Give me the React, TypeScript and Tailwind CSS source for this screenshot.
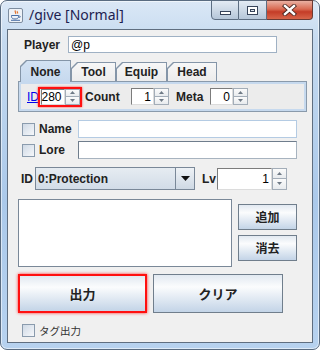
import React from "react";

const sans = "font-['Liberation_Sans','Noto_Sans_CJK_JP',sans-serif]";
const jp = "font-['Noto_Sans_CJK_JP',sans-serif]";
const btn =
  "flex items-center justify-center border border-[#707e8c] bg-[linear-gradient(to_bottom,#e2e9f1,#fbfcfd_32%,#c3d4e7)] font-bold text-[#222]";

function Arrow({ up }: { up?: boolean }) {
  return (
    <svg width="5" height="3" viewBox="0 0 5 3">
      <path d={up ? "M0 3h5L2.5 0z" : "M0 0h5L2.5 3z"} fill="#6f7a86" />
    </svg>
  );
}

function Spinner({ value, field, height }: { value: string; field: string; height: string }) {
  return (
    <div className={`flex ${height}`}>
      <div
        className={`${field} flex items-center justify-end border border-t-[#7c7c7c] border-l-[#7c7c7c] border-b-[#dcdcdc] border-r-[#dcdcdc] bg-white pr-[2px] text-[12px] text-black`}
      >
        {value}
      </div>
      <div className="flex w-[15px] flex-col">
        <div className="flex flex-1 items-center justify-center border border-[#a3adb8] bg-[linear-gradient(to_bottom,#fbfbfb,#e8ebee)]">
          <Arrow up />
        </div>
        <div className="-mt-px flex flex-1 items-center justify-center border border-[#a3adb8] bg-[linear-gradient(to_bottom,#fbfbfb,#e8ebee)]">
          <Arrow />
        </div>
      </div>
    </div>
  );
}

function Tab({ label, w, selected }: { label: string; w: string; selected?: boolean }) {
  const clip = "[clip-path:polygon(6px_0,100%_0,100%_100%,0_100%,0_6px)]";
  return (
    <div
      className={`${w} ${clip} bg-[#8495a8] px-px pt-px ${
        selected ? "h-[22px]" : "mb-px h-[19px]"
      }`}
    >
      <div
        className={`${clip} flex h-full items-center justify-center text-[12px] font-bold text-[#222] ${
          selected
            ? "bg-[linear-gradient(to_bottom,#d3e2f3,#c6d9ee)]"
            : "bg-[linear-gradient(to_bottom,#f7f7f7,#ececec)]"
        }`}
      >
        {label}
      </div>
    </div>
  );
}

function Check() {
  return (
    <div className="h-[13px] w-[13px] border border-[#8a9bad] bg-[linear-gradient(135deg,#cfd9e5,#f6f8fb)]" />
  );
}

function JavaIcon() {
  return (
    <svg width="15" height="15" viewBox="0 0 15 15">
      <rect x="0.5" y="0.5" width="14" height="14" rx="1.5" fill="#eef2f7" stroke="#7d8da0" />
      <path d="M7.5 2.5c-1.5 1.2 1.2 1.8 0 3.4M9.5 3.2c-1 .8.8 1.2 0 2.3" stroke="#e0712b" strokeWidth="1.2" fill="none" />
      <path d="M3.5 7.5h7v1.2c0 1.5-1.5 2.3-3.5 2.3S3.5 10.2 3.5 8.7z" fill="none" stroke="#4a6fa5" strokeWidth="1" />
      <path d="M10.5 8h1.2c.8 0 .8 1.4 0 1.4h-1" fill="none" stroke="#4a6fa5" strokeWidth="0.9" />
      <path d="M3 12.3h9" stroke="#4a6fa5" strokeWidth="1" />
    </svg>
  );
}

export default function App() {
  return (
    <div className={`h-[350px] w-[320px] bg-white ${sans}`}>
      <div className="flex h-[350px] w-[320px] flex-col rounded-[7px] border border-[#5a6c81] bg-[linear-gradient(to_bottom,#dbe8f6,#c5daf0_40px,#abc9ea_200px,#b7d2ef)] shadow-[inset_0_0_0_1px_rgba(255,255,255,0.55)]">
        {/* title bar */}
        <div className="flex h-[28px] items-start">
          <div className="ml-[7px] mt-[7px]">
            <JavaIcon />
          </div>
          <div className="ml-[6px] mt-[5px] font-['Noto_Sans',sans-serif] text-[14px] leading-[18px] text-[#1d2150]">
            /give [Normal]
          </div>
          <div className="-mt-px ml-auto mr-[6px] flex h-[20px]">
            <div className="flex w-[28px] items-end justify-center rounded-bl-[4px] border border-[#5c6d81] bg-[linear-gradient(to_bottom,#e3ebf4,#cdd9e6_50%,#b5c6d9)] pb-[4px]">
              <div className="h-[4px] w-[11px] border border-[#37445a] bg-white" />
            </div>
            <div className="flex w-[28px] items-center justify-center border border-l-0 border-[#5c6d81] bg-[linear-gradient(to_bottom,#e3ebf4,#cdd9e6_50%,#b5c6d9)]">
              <div className="flex h-[9px] w-[11px] items-center justify-center border border-[#37445a] bg-white">
                <div className="h-[3px] w-[5px] border border-[#37445a] bg-[#dfe6ee]" />
              </div>
            </div>
            <div className="flex w-[46px] items-center justify-center rounded-br-[4px] border border-l-0 border-[#6b3a33] bg-[linear-gradient(to_bottom,#eab0a2,#d96a52_45%,#c43c27_60%,#d7654a)]">
              <svg width="15" height="12" viewBox="0 0 15 12">
                <path d="M3 2l9 8M12 2l-9 8" stroke="#4a2620" strokeWidth="4.2" strokeLinecap="square" />
                <path d="M3 2l9 8M12 2l-9 8" stroke="#fff" strokeWidth="2.4" strokeLinecap="square" />
              </svg>
            </div>
          </div>
        </div>

        {/* content */}
        <div className="mx-[6px] flex h-[314px] flex-col border border-[#5f6e80] bg-[#f0f0f0]">
          {/* player */}
          <div className="mt-[6px] flex h-[17px] items-center">
            <div className="ml-[16px] w-[44px] text-[12px] font-bold text-[#222]">Player</div>
            <div className="flex h-[17px] w-[209px] items-center border border-[#9fb1c4] bg-white pl-[2px] text-[12px] text-black">
              @p
            </div>
          </div>

          {/* tabs */}
          <div className="relative z-10 mt-[7px] -mb-px ml-[12px] flex h-[22px] items-end">
            <Tab label="None" w="w-[51px]" selected />
            <Tab label="Tool" w="w-[45px]" />
            <Tab label="Equip" w="w-[51px]" />
            <Tab label="Head" w="w-[50px]" />
          </div>
          <div className="ml-[10px] flex h-[31px] w-[289px] items-center border border-[#8a9aab] bg-[#ececec] pl-[8px] shadow-[inset_0_0_0_2px_#c6d9ee]">
            <span className="w-[11px] text-[12px] text-[#0000ee] underline">ID</span>
            <div className="flex h-[20px] w-[44px] items-center justify-center border-2 border-[#ff1010] shadow-[0_0_2px_#ff4040]">
              <Spinner value="280" field="w-[24px]" height="h-[16px]" />
            </div>
            <span className="ml-[3px] w-[46px] text-[12px] font-bold text-[#222]">Count</span>
            <Spinner value="1" field="w-[23px]" height="h-[17px]" />
            <span className="ml-[7px] w-[34px] text-[12px] font-bold text-[#222]">Meta</span>
            <Spinner value="0" field="w-[23px]" height="h-[17px]" />
          </div>

          {/* name / lore */}
          <div className="mt-[8px] flex h-[18px] items-center">
            <div className="ml-[14px]">
              <Check />
            </div>
            <span className="ml-[4px] w-[39px] text-[12px] font-bold text-[#222]">Name</span>
            <div className="h-[18px] w-[219px] border border-[#b4cbe3] bg-white" />
          </div>
          <div className="mt-[3px] flex h-[18px] items-center">
            <div className="ml-[14px]">
              <Check />
            </div>
            <span className="ml-[4px] w-[39px] text-[12px] font-bold text-[#222]">Lore</span>
            <div className="h-[18px] w-[219px] border border-t-[#6f7d8c] border-l-[#6f7d8c] border-b-[#a7b3bf] border-r-[#a7b3bf] bg-white" />
          </div>

          {/* enchant */}
          <div className="mt-[8px] flex h-[23px] items-center">
            <span className="ml-[13px] w-[14px] text-[12px] font-bold text-[#222]">ID</span>
            <div className="flex h-[23px] w-[160px] border border-[#7a8898] bg-[linear-gradient(to_bottom,#e6ecf2,#d2dce7)]">
              <div className="flex flex-1 items-center pl-[2px] text-[12px] font-bold text-[#222]">0:Protection</div>
              <div className="flex w-[19px] items-center justify-center border-l border-[#7a8898] bg-[linear-gradient(to_bottom,#eef2f6,#cfd9e4)]">
                <svg width="9" height="5" viewBox="0 0 9 5">
                  <path d="M0 0h9L4.5 5z" fill="#111" />
                </svg>
              </div>
            </div>
            <span className="ml-[7px] w-[15px] text-[12px] font-bold text-[#222]">Lv</span>
            <Spinner value="1" field="w-[55px]" height="h-[22px]" />
          </div>

          {/* list + side buttons */}
          <div className="mt-[9px] flex">
            <div className="ml-[10px] h-[68px] w-[214px] border border-[#7a8898] bg-white" />
            <div className="ml-[6px] mt-[5px] flex w-[59px] flex-col gap-[5px]">
              <div className={`${btn} ${jp} h-[26px] text-[12px]`}>追加</div>
              <div className={`${btn} ${jp} h-[26px] text-[12px]`}>消去</div>
            </div>
          </div>

          {/* big buttons */}
          <div className="mt-[7px] flex">
            <div
              className={`${btn} ${jp} ml-[10px] h-[39px] w-[129px] border-2 border-[#ff1010] text-[13px] shadow-[0_0_3px_#ff3030]`}
            >
              出力
            </div>
            <div className={`${btn} ${jp} ml-[6px] h-[39px] w-[130px] text-[13px]`}>クリア</div>
          </div>

          {/* tag output */}
          <div className="mt-[10px] flex items-center">
            <div className="ml-[14px]">
              <Check />
            </div>
            <span className={`ml-[4px] text-[10.5px] text-[#333] ${jp}`}>タグ出力</span>
          </div>
        </div>
      </div>
    </div>
  );
}
